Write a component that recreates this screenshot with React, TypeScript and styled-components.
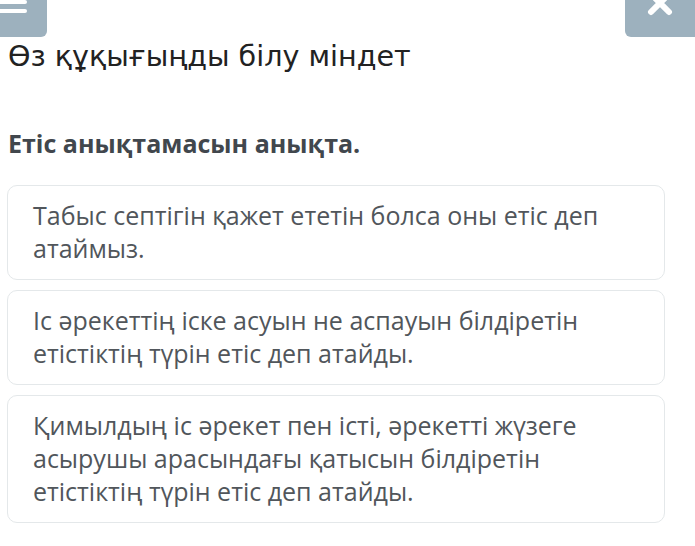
import React from 'react'
import styled, { createGlobalStyle } from 'styled-components'

const GlobalStyle = createGlobalStyle`
  html, body {
    margin: 0;
    padding: 0;
    background: #ffffff;
  }
  body {
    font-family: "Open Sans", "Noto Sans", sans-serif;
  }
`

const Page = styled.div`
  width: 695px;
  height: 546px;
  overflow: hidden;
  background: #ffffff;
`

const TopBar = styled.div`
  display: flex;
  justify-content: space-between;
  height: 37px;
`

const CornerButton = styled.button<{ $side: 'left' | 'right' }>`
  width: ${p => (p.$side === 'left' ? 47 : 70)}px;
  height: 37px;
  padding: 0;
  border: none;
  background: #9db1be;
  border-radius: ${p => (p.$side === 'left' ? '0 0 6px 0' : '0 0 0 6px')};
  display: block;
  overflow: hidden;

  svg {
    display: block;
  }
`

const Title = styled.h1`
  margin: 0;
  padding: 1px 0 0 8px;
  font-family: "DejaVu Sans", "Noto Sans", sans-serif;
  font-weight: 400;
  font-size: 28.6px;
  line-height: 36px;
  color: #222222;
`

const Question = styled.h2`
  margin: 54px 0 0 8px;
  font-family: "Open Sans", sans-serif;
  font-weight: 700;
  font-size: 25px;
  line-height: 30px;
  color: #41474d;
`

const Options = styled.div`
  display: flex;
  flex-direction: column;
  gap: 10px;
  margin: 27px 0 0 7px;
  width: 658px;
`

const OptionCard = styled.div`
  box-sizing: border-box;
  border: 1px solid #e4e8ea;
  border-radius: 10px;
  padding: 13px 24px 14px 25px;
  font-family: "Open Sans", sans-serif;
  font-size: 25px;
  line-height: 33px;
  color: #51565b;
  background: #ffffff;
`

const options = [
  'Табыс септігін қажет ететін болса оны етіс деп атаймыз.',
  'Іс әрекеттің іске асуын не аспауын білдіретін етістіктің түрін етіс деп атайды.',
  'Қимылдың іс әрекет пен істі, әрекетті жүзеге асырушы арасындағы қатысын білдіретін етістіктің түрін етіс деп атайды.',
]

export default function App() {
  return (
    <Page>
      <GlobalStyle />
      <TopBar>
        <CornerButton $side="left" aria-label="menu">
          <svg width="47" height="37" viewBox="0 0 47 37">
            <rect x="-4" y="0" width="31" height="4" rx="2" fill="#ffffff" />
            <rect x="-4" y="9" width="31" height="4" rx="2" fill="#ffffff" />
          </svg>
        </CornerButton>
        <CornerButton $side="right" aria-label="close">
          <svg width="70" height="37" viewBox="0 0 70 37">
            <path d="M26 -6 L44 12 M44 -6 L26 12" stroke="#ffffff" strokeWidth="6" strokeLinecap="round" />
          </svg>
        </CornerButton>
      </TopBar>
      <Title>Өз құқығыңды білу міндет</Title>
      <Question>Етіс анықтамасын анықта.</Question>
      <Options>
        {options.map(text => (
          <OptionCard key={text}>{text}</OptionCard>
        ))}
      </Options>
    </Page>
  )
}
